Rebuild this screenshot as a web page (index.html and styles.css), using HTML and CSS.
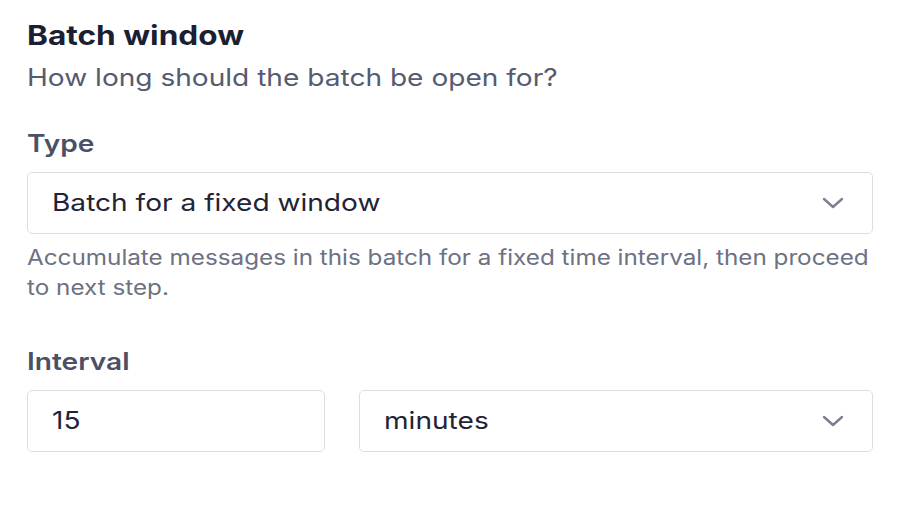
FILE: index.html
```html
<!DOCTYPE html>
<html>
<head>
<meta charset="utf-8">
<link rel="stylesheet" href="styles.css">
</head>
<body>
<div class="panel">
  <h2 class="title wide">Batch window</h2>
  <p class="subtitle wide">How long should the batch be open for?</p>

  <div class="field field-type">
    <div class="label wide">Type</div>
    <div class="control select">
      <span class="value wide">Batch for a fixed window</span>
      <svg class="chevron" width="22" height="12" viewBox="0 0 22 12"><path d="M2 2 L11 10 L20 2" fill="none" stroke="#7b7f8e" stroke-width="2.4" stroke-linecap="round" stroke-linejoin="round"/></svg>
    </div>
    <p class="help">Accumulate messages in this batch for a fixed time interval, then proceed to next step.</p>
  </div>

  <div class="field field-interval">
    <div class="label wide">Interval</div>
    <div class="row">
      <div class="control input"><span class="value wide">15</span></div>
      <div class="control select unit">
        <span class="value wide">minutes</span>
        <svg class="chevron" width="22" height="12" viewBox="0 0 22 12"><path d="M2 2 L11 10 L20 2" fill="none" stroke="#7b7f8e" stroke-width="2.4" stroke-linecap="round" stroke-linejoin="round"/></svg>
      </div>
    </div>
  </div>
</div>
</body>
</html>
```
FILE: styles.css
```css
html, body {
  margin: 0;
  padding: 0;
  background: #ffffff;
}
body {
  font-family: "Inter", "Noto Sans", sans-serif;
}
.panel {
  padding: 18px 31px 0 27px;
}
.wide {
  transform: scaleX(1.17);
  transform-origin: 0 0;
}
.title,
.subtitle,
.label {
  width: calc(100% / 1.17);
}
.title {
  margin: 0;
  font-size: 27px;
  line-height: 36px;
  font-weight: 700;
  color: #1b1f33;
}
.subtitle {
  margin: 6px 0 0;
  font-size: 24px;
  line-height: 36px;
  font-weight: 400;
  color: #565b6f;
}
.field-type {
  margin-top: 30px;
}
.field-interval {
  margin-top: 41px;
}
.label {
  font-size: 24px;
  line-height: 36px;
  font-weight: 600;
  color: #4b5064;
}
.control {
  margin-top: 10px;
  box-sizing: border-box;
  height: 62px;
  border: 1.5px solid #dcdde3;
  border-radius: 5px;
  display: flex;
  align-items: center;
  padding: 0 28px 0 24px;
  background: #fff;
}
.value {
  font-size: 24px;
  line-height: 36px;
  color: #1f2437;
  flex: none;
}
.chevron {
  display: block;
  flex: none;
  margin-left: auto;
}
.help {
  margin: 9px 0 0;
  width: calc(100% / 1.13);
  transform: scaleX(1.155);
  transform-origin: 0 0;
  font-size: 21px;
  line-height: 30px;
  color: #6c7183;
}
.row {
  display: flex;
  gap: 34px;
}
.input {
  width: 298px;
  flex: none;
}
.unit {
  flex: 1;
}
```
